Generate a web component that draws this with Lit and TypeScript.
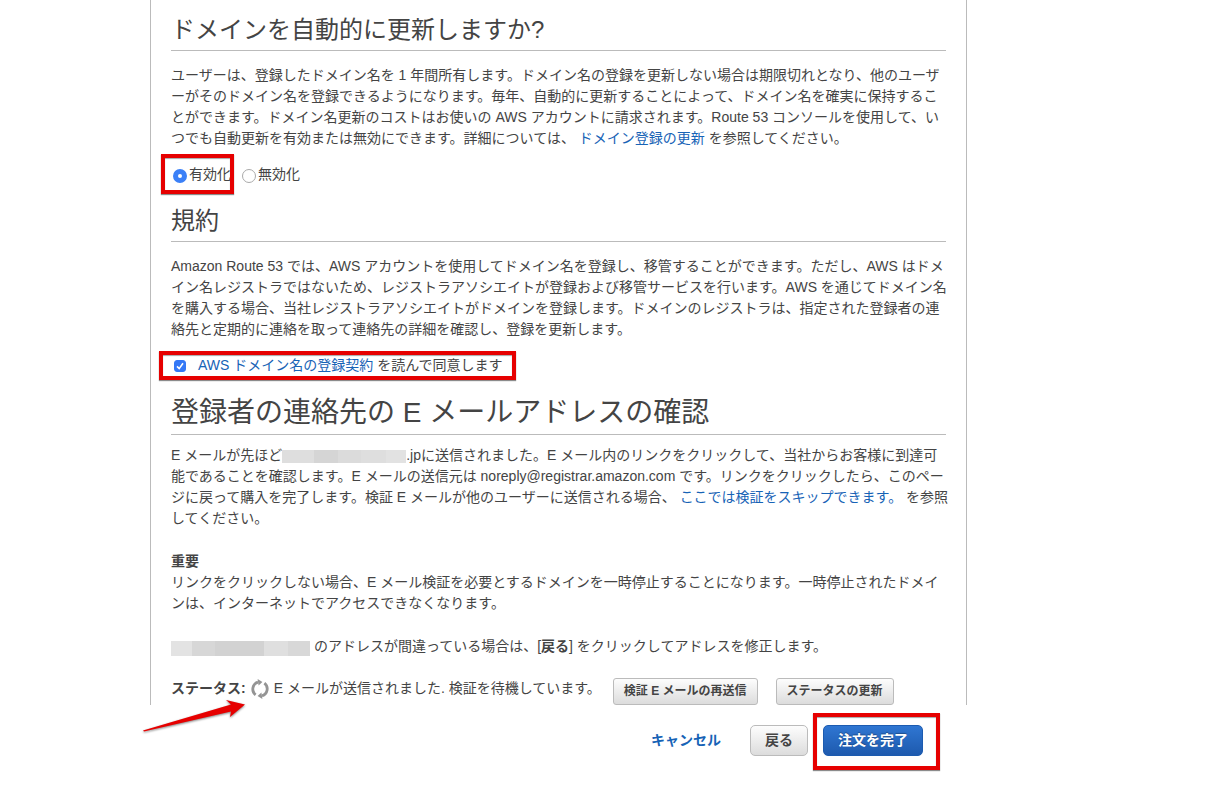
import { LitElement, html, css, svg } from "lit";
import { customElement, state } from "lit/decorators.js";

const refreshIcon = svg`
  <path d="M4.6 15.8 A7.2 7.2 0 0 1 7 3.2" fill="none" stroke="#949494" stroke-width="2.8"/>
  <path d="M6.6 0 L11.4 3 L7.6 6.4 Z" fill="#949494"/>
  <path d="M13.4 4.2 A7.2 7.2 0 0 1 11 16.8" fill="none" stroke="#949494" stroke-width="2.8"/>
  <path d="M11.4 20 L6.6 17 L10.4 13.6 Z" fill="#949494"/>
`;

@customElement("app-root")
export class AppRoot extends LitElement {
  @state() private renew = "on";

  static styles = css`
    :host {
      display: block;
      background: #fff;
      color: #444;
      font: 14px/21px "Liberation Sans", "Noto Sans CJK JP", sans-serif;
      line-break: normal;
    }
    * {
      box-sizing: border-box;
    }
    .page {
      padding: 0 241px 30px 150px;
    }
    .panel {
      padding: 10px 20px 0;
      border: 1px solid #bbb;
      border-width: 0 1px;
    }
    h1,
    h2,
    p {
      margin: 0;
    }
    p {
      margin-right: -5px;
    }
    h1,
    h2 {
      font-weight: 400;
      border-bottom: 1px solid #bbb;
    }
    h2 {
      font-size: 24px;
      line-height: 40px;
      margin-bottom: 14px;
    }
    h1 {
      font-size: 28px;
      line-height: 42px;
      margin-bottom: 10px;
    }
    a {
      color: #1763b6;
      text-decoration: none;
    }
    .block {
      margin-bottom: 22px;
    }
    .last {
      margin-bottom: 21px;
    }
    .choices {
      display: flex;
      gap: 11px;
      margin: 15px 0 16px;
      padding-left: 2px;
    }
    .consent {
      display: flex;
      margin: 15px 0 16px;
      padding-left: 3px;
    }
    label {
      display: flex;
      align-items: center;
      gap: 2px;
    }
    .consent label {
      gap: 12px;
    }
    .marked {
      position: relative;
    }
    .marked::after {
      content: "";
      position: absolute;
      border: 4px solid #e60000;
      box-shadow: 0 1px 1px rgba(0, 0, 0, 0.45), inset 0 1px 1px rgba(0, 0, 0, 0.35);
      pointer-events: none;
    }
    .mark-radio::after {
      inset: -10px -3px -9px -12px;
    }
    .mark-consent::after {
      inset: -4px -14px -4px -15px;
    }
    .mark-submit::after {
      inset: -12px -17px -14px -10px;
    }
    input {
      appearance: none;
      flex: none;
      margin: 3px 0 0;
      background: #fff;
      border: 1px solid #aaa;
    }
    input[type="radio"] {
      width: 14px;
      height: 14px;
      border-radius: 50%;
    }
    input[type="radio"]:checked {
      border: 5px solid #3b80f7;
    }
    input[type="checkbox"] {
      width: 12px;
      height: 12px;
      margin-top: 1px;
      border-radius: 3px;
    }
    input[type="checkbox"]:checked {
      border-color: #3478f6;
      background: #3478f6
        url("data:image/svg+xml,%3Csvg xmlns='http://www.w3.org/2000/svg' viewBox='0 0 10 10'%3E%3Cpath d='M2 5.4 4.2 7.6 8 2.2' fill='none' stroke='white' stroke-width='1.6'/%3E%3C/svg%3E");
    }
    .redacted {
      display: inline-block;
      vertical-align: top;
      margin-top: 5px;
    }
    .address {
      width: 124px;
      height: 13px;
      background: linear-gradient(
        90deg,
        #dedede 0 26%,
        #d5d5d5 26% 45%,
        #dbdbdb 45% 64%,
        #dedede 64% 84%,
        #e2e2e2 84%
      );
    }
    .sender {
      width: 139px;
      height: 15px;
      background: linear-gradient(
        90deg,
        #e3e3e3 0 15%,
        #d7d7d7 15% 32%,
        #d2d2d2 32% 67%,
        #dfdfdf 67% 84%,
        #d8d8d8 84%
      );
    }
    .status {
      position: relative;
      display: flex;
      align-items: center;
      gap: 5px;
    }
    .status button {
      margin-left: 13px;
    }
    .status-text {
      margin-right: -6px;
    }
    .status strong,
    .status-text,
    .spin {
      margin-bottom: 6px;
    }
    .spin {
      width: 18px;
      height: 20px;
    }
    .arrow {
      position: absolute;
      left: -29px;
      top: 21px;
      width: 106px;
      height: 36px;
      overflow: visible;
      filter: drop-shadow(0 1px 1px rgba(0, 0, 0, 0.5));
    }
    button {
      font: bold 12px/15px "Liberation Sans", "Noto Sans CJK JP", sans-serif;
      color: #444;
      padding: 5px 10px;
      border: 1px solid #bbb;
      border-radius: 3px;
      background: linear-gradient(#fdfdfd, #dcdcdc);
      white-space: nowrap;
    }
    .actions {
      display: flex;
      justify-content: flex-end;
      align-items: center;
      margin-top: 20px;
      padding-right: 44px;
    }
    .actions a {
      font-weight: 700;
      margin-right: 29px;
    }
    .actions button {
      font-size: 14px;
      line-height: 21px;
      padding: 4px 14px;
      border-radius: 5px;
    }
    .actions .primary {
      color: #fff;
      border-color: #1c5bb0;
      background: linear-gradient(#2f76d2, #1e5aae);
      text-shadow: 0 -1px 1px rgba(0, 0, 0, 0.3);
    }
    .mark-submit {
      display: flex;
      margin-left: 15px;
    }
  `;

  render() {
    return html`
      <div class="page" lang="ja">
        <main class="panel">
          <h2>ドメインを自動的に更新しますか?</h2>
          <p>ユーザーは、登録したドメイン名を 1 年間所有します。ドメイン名の登録を更新しない場合は期限切れとなり、他のユーザーがそのドメイン名を登録できるようになります。毎年、自動的に更新することによって、ドメイン名を確実に保持することができます。ドメイン名更新のコストはお使いの AWS アカウントに請求されます。Route 53 コンソールを使用して、いつでも自動更新を有効または無効にできます。詳細については、 <a href="#renewal">ドメイン登録の更新</a> を参照してください。</p>
          <div class="choices">
            <label class="marked mark-radio">
              <input type="radio" name="renew" .checked=${this.renew === "on"} @change=${() => (this.renew = "on")} />有効化
            </label>
            <label>
              <input type="radio" name="renew" .checked=${this.renew === "off"} @change=${() => (this.renew = "off")} />無効化
            </label>
          </div>

          <h2>規約</h2>
          <p>Amazon Route 53 では、AWS アカウントを使用してドメイン名を登録し、移管することができます。ただし、AWS はドメイン名レジストラではないため、レジストラアソシエイトが登録および移管サービスを行います。AWS を通じてドメイン名を購入する場合、当社レジストラアソシエイトがドメインを登録します。ドメインのレジストラは、指定された登録者の連絡先と定期的に連絡を取って連絡先の詳細を確認し、登録を更新します。</p>
          <div class="consent">
            <label class="marked mark-consent">
              <input type="checkbox" checked />
              <span><a href="#agreement">AWS ドメイン名の登録契約</a> を読んで同意します</span>
            </label>
          </div>

          <h1>登録者の連絡先の E メールアドレスの確認</h1>
          <p class="block">E メールが先ほど<span class="redacted address"></span>.jpに送信されました。E メール内のリンクをクリックして、当社からお客様に到達可能であることを確認します。E メールの送信元は noreply@registrar.amazon.com です。リンクをクリックしたら、このページに戻って購入を完了します。検証 E メールが他のユーザーに送信される場合、 <a href="#skip">ここでは検証をスキップできます。</a> を参照してください。</p>
          <p class="block"><strong>重要</strong><br />リンクをクリックしない場合、E メール検証を必要とするドメインを一時停止することになります。一時停止されたドメインは、インターネットでアクセスできなくなります。</p>
          <p class="last"><span class="redacted sender"></span> のアドレスが間違っている場合は、[<strong>戻る</strong>] をクリックしてアドレスを修正します。</p>
          <div class="status">
            <strong>ステータス:</strong>
            <svg class="spin" viewBox="0 0 18 20" aria-hidden="true">${refreshIcon}</svg>
            <span class="status-text">E メールが送信されました. 検証を待機しています。</span>
            <button type="button">検証 E メールの再送信</button>
            <button type="button">ステータスの更新</button>
            <svg class="arrow" viewBox="0 0 106 36" aria-hidden="true">
              <path d="M1 31.5 L89 5.5 L84 1 L103 5.5 L88 18 L89 12.5 L2 32.5 Z" fill="#e60000" />
            </svg>
          </div>
        </main>
        <div class="actions">
          <a href="#cancel">キャンセル</a>
          <button type="button">戻る</button>
          <span class="marked mark-submit"><button type="button" class="primary">注文を完了</button></span>
        </div>
      </div>
    `;
  }
}
